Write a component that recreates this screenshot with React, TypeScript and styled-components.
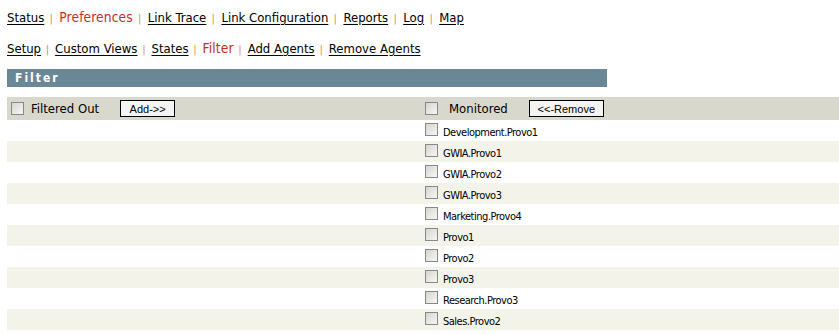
import React from "react";
import styled, { createGlobalStyle } from "styled-components";

const Global = createGlobalStyle`
  html, body { margin: 0; padding: 0; background: #fff; }
  body { font-family: Tahoma, "DejaVu Sans Condensed", "DejaVu Sans", sans-serif; color: #000; }
`;

const Page = styled.div`
  padding: 9px 0 0 7px;
`;

const Nav = styled.div<{ $gap: number; $sep: number }>`
  font-size: 13px;
  line-height: 16px;
  height: 16px;
  margin-bottom: ${(p) => p.$gap}px;
  white-space: nowrap;
  --sep: ${(p) => p.$sep}px;
`;

const NavLink = styled.a<{ $active?: boolean }>`
  color: ${(p) => (p.$active ? "#c42f1a" : "#000")};
  font-size: ${(p) => (p.$active ? "13.7px" : "13px")};
  letter-spacing: ${(p) => (p.$active ? "0.1px" : "0")};
  text-decoration: ${(p) => (p.$active ? "none" : "underline")};
  text-underline-offset: 2px;
  cursor: pointer;
`;

const Sep = styled.span`
  color: #d9831f;
  font-size: 10px;
  padding: 0 var(--sep) 0 calc(var(--sep) - 1px);
`;

const Bar = styled.div`
  width: 600px;
  height: 18px;
  background: #6a8797;
  color: #fff;
  font-size: 12px;
  font-weight: bold;
  letter-spacing: 2px;
  line-height: 18px;
  padding-left: 8px;
  box-sizing: border-box;
  margin-bottom: 10px;
`;

const Table = styled.div`
  display: grid;
  grid-template-columns: 414px 1fr;
`;

const HeadCell = styled.div<{ $pad: number }>`
  background: #d8d8cc;
  height: 23px;
  display: flex;
  align-items: center;
  padding-left: ${(p) => p.$pad}px;
  font-size: 13px;
`;

const Box = styled.span`
  display: inline-block;
  width: 11px;
  height: 11px;
  border: 1px solid #888888;
  background: linear-gradient(135deg, #d6d6d0 0%, #f6f6f4 100%);
  flex: none;
`;

const HeadLabel = styled.span<{ $gap: number }>`
  margin-left: ${(p) => p.$gap}px;
  margin-right: 21px;
`;

const Button = styled.button<{ $w: number }>`
  width: ${(p) => p.$w}px;
  height: 17px;
  border: 1px solid #000;
  background: #f4f4f4;
  font-family: "Liberation Sans", Arial, sans-serif;
  font-size: 11px;
  padding: 0;
  line-height: 14px;
  color: #000;
`;

const Cell = styled.div<{ $striped: boolean }>`
  background: ${(p) => (p.$striped ? "#f3f3ea" : "#fff")};
  height: 21px;
  display: flex;
  align-items: flex-start;
  padding-left: 4px;
`;

const ItemBox = styled(Box)`
  margin-top: 3px;
`;

const ItemLabel = styled.span`
  font-size: 11px;
  letter-spacing: -0.5px;
  margin-left: 5px;
  margin-top: 6px;
  line-height: 13px;
  color: #000;
`;

const nav1 = ["Status", "Preferences", "Link Trace", "Link Configuration", "Reports", "Log", "Map"];
const nav2 = ["Setup", "Custom Views", "States", "Filter", "Add Agents", "Remove Agents"];
const items = [
  "Development.Provo1",
  "GWIA.Provo1",
  "GWIA.Provo2",
  "GWIA.Provo3",
  "Marketing.Provo4",
  "Provo1",
  "Provo2",
  "Provo3",
  "Research.Provo3",
  "Sales.Provo2",
];

function NavRow({ links, active, gap, sep }: { links: string[]; active: string; gap: number; sep: number }) {
  return (
    <Nav $gap={gap} $sep={sep}>
      {links.map((l, i) => (
        <React.Fragment key={l}>
          {i > 0 && <Sep>|</Sep>}
          <NavLink $active={l === active}>{l}</NavLink>
        </React.Fragment>
      ))}
    </Nav>
  );
}

export default function App() {
  return (
    <>
      <Global />
      <Page>
        <NavRow links={nav1} active="Preferences" gap={15} sep={6.5} />
        <NavRow links={nav2} active="Filter" gap={13} sep={6} />
        <Bar>Filter</Bar>
        <Table>
          <HeadCell $pad={4}>
            <Box />
            <HeadLabel $gap={7}>Filtered Out</HeadLabel>
            <Button $w={55}>Add-&gt;&gt;</Button>
          </HeadCell>
          <HeadCell $pad={4}>
            <Box />
            <HeadLabel $gap={11}>Monitored</HeadLabel>
            <Button $w={75}>&lt;&lt;-Remove</Button>
          </HeadCell>
          {items.map((it, i) => (
            <React.Fragment key={it}>
              <Cell $striped={i % 2 === 1} />
              <Cell $striped={i % 2 === 1}>
                <ItemBox />
                <ItemLabel>{it}</ItemLabel>
              </Cell>
            </React.Fragment>
          ))}
        </Table>
      </Page>
    </>
  );
}
